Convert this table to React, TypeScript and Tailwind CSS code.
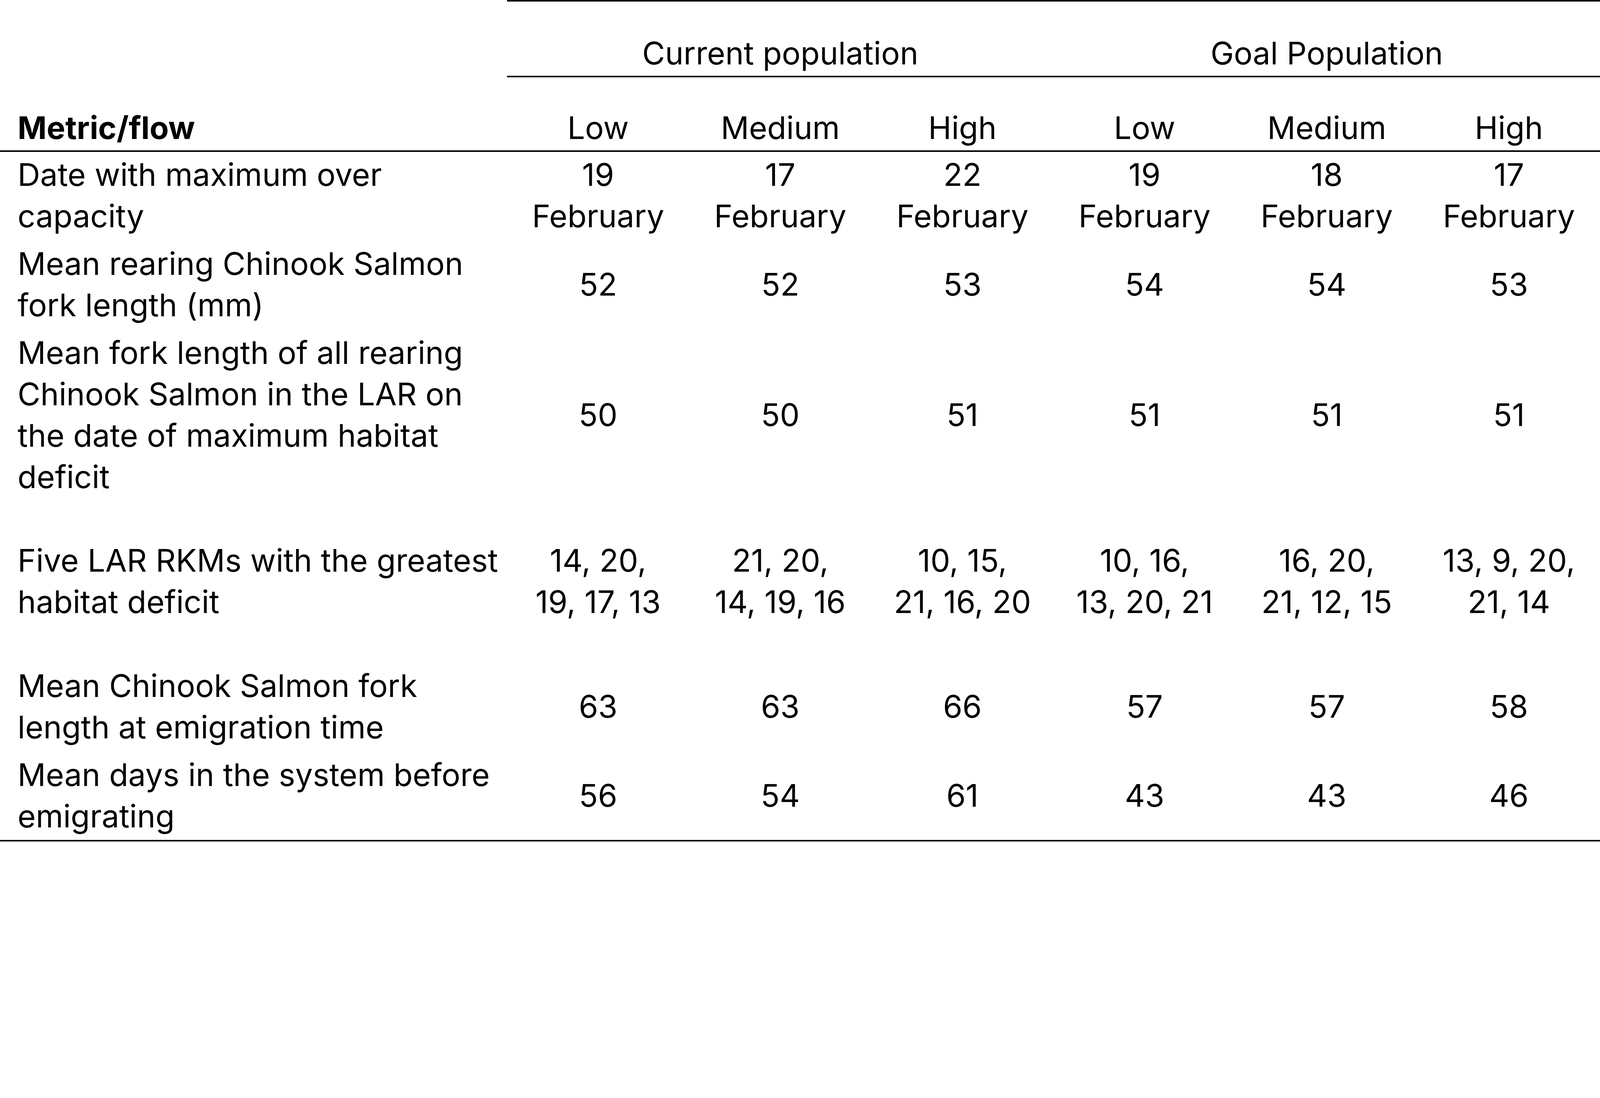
type Row = {
  label: string[];
  values: string[][];
  pad: string;
};

const rows: Row[] = [
  {
    label: ["Date with maximum over", "capacity"],
    values: [
      ["19", "February"],
      ["17", "February"],
      ["22", "February"],
      ["19", "February"],
      ["18", "February"],
      ["17", "February"],
    ],
    pad: "pt-[5px] pb-[8px]",
  },
  {
    label: ["Mean rearing Chinook Salmon", "fork length (mm)"],
    values: [["52"], ["52"], ["53"], ["54"], ["54"], ["53"]],
    pad: "py-[8px]",
  },
  {
    label: [
      "Mean fork length of all rearing",
      "Chinook Salmon in the LAR on",
      "the date of maximum habitat",
      "deficit",
    ],
    values: [["50"], ["50"], ["51"], ["51"], ["51"], ["51"]],
    pad: "py-[8px]",
  },
  {
    label: ["Five LAR RKMs with the greatest", "habitat deficit"],
    values: [
      ["14, 20,", "19, 17, 13"],
      ["21, 20,", "14, 19, 16"],
      ["10, 15,", "21, 16, 20"],
      ["10, 16,", "13, 20, 21"],
      ["16, 20,", "21, 12, 15"],
      ["13, 9, 20,", "21, 14"],
    ],
    pad: "pt-[100px] pb-[101px]",
  },
  {
    label: ["Mean Chinook Salmon fork", "length at emigration time"],
    values: [["63"], ["63"], ["66"], ["57"], ["57"], ["58"]],
    pad: "py-[8px]",
  },
  {
    label: ["Mean days in the system before", "emigrating"],
    values: [["56"], ["54"], ["61"], ["43"], ["43"], ["46"]],
    pad: "py-[8px]",
  },
];

const flows = ["Low", "Medium", "High", "Low", "Medium", "High"];

function Lines({ lines }: { lines: string[] }) {
  return (
    <>
      {lines.map((l, i) => (
        <div key={i} className="whitespace-nowrap">
          {l}
        </div>
      ))}
    </>
  );
}

export default function App() {
  return (
    <div
      className="min-h-screen w-full bg-white text-black"
      style={{ fontFamily: "Inter, 'Liberation Sans', sans-serif" }}
    >
      <table className="w-full table-fixed border-separate border-spacing-0 text-[80px] leading-[106px]">
        <colgroup>
          <col className="w-[1298px]" />
          {flows.map((_, i) => (
            <col key={i} />
          ))}
        </colgroup>
        <thead>
          <tr>
            <th className="p-0" />
            <th
              colSpan={3}
              className="border-y-4 border-black pt-[79px] pb-[5px] text-center font-normal"
            >
              Current population
            </th>
            <th
              colSpan={3}
              className="border-y-4 border-black pt-[79px] pb-[5px] text-center font-normal"
            >
              Goal Population
            </th>
          </tr>
          <tr>
            <th className="border-b-4 border-black pt-[76px] pb-[5px] pl-[45px] text-left font-bold">
              Metric/flow
            </th>
            {flows.map((f, i) => (
              <th
                key={i}
                className="border-b-4 border-black pt-[76px] pb-[5px] text-center font-normal"
              >
                {f}
              </th>
            ))}
          </tr>
        </thead>
        <tbody>
          {rows.map((row, r) => {
            const last = r === rows.length - 1;
            const edge = last ? "border-b-4 border-black" : "";
            return (
              <tr key={r}>
                <td className={`${row.pad} ${edge} pl-[45px] align-middle`}>
                  <Lines lines={row.label} />
                </td>
                {row.values.map((v, i) => (
                  <td key={i} className={`${row.pad} ${edge} text-center align-middle`}>
                    <Lines lines={v} />
                  </td>
                ))}
              </tr>
            );
          })}
        </tbody>
      </table>
    </div>
  );
}
